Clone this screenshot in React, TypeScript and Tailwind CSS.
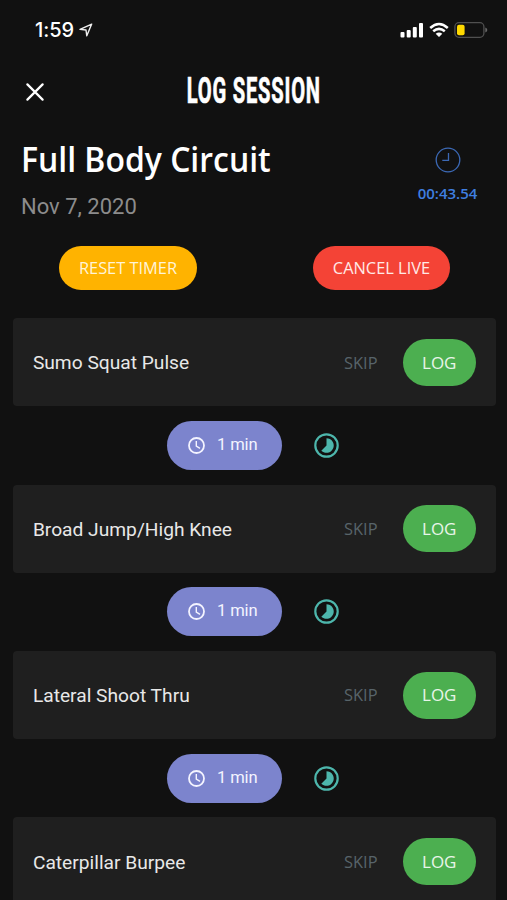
import React from "react";

const exercises = ["Sumo Squat Pulse", "Broad Jump/High Knee", "Lateral Shoot Thru", "Caterpillar Burpee"];

function StatusBar() {
  return (
    <div className="flex h-[60px] shrink-0 items-center justify-between pr-[19px] pl-[35px]">
      <div className="flex items-center gap-[5px]">
        <span className="font-['Inter',sans-serif] text-[20px] leading-6 font-medium tracking-[-0.1px]">1:59</span>
        <svg width="14" height="14" viewBox="0 0 14 14" fill="none" stroke="#eee" strokeWidth="1.4" strokeLinejoin="round">
          <path d="M12.7 1.1 1 6.4 7 7l.8 5.8z" />
        </svg>
      </div>
      <div className="flex items-center">
        <svg width="24" height="16" viewBox="0 0 24 16" fill="#fff">
          <rect x="0.5" y="10" width="4" height="5.5" rx="1" />
          <rect x="6.7" y="8" width="4" height="7.5" rx="1" />
          <rect x="12.8" y="5" width="4" height="10.5" rx="1" />
          <rect x="19" y="1" width="4" height="14.5" rx="1" />
        </svg>
        <svg className="ml-[5px]" width="20" height="16" viewBox="0 0 20 16" fill="none" stroke="#fff" strokeWidth="2.5">
          <path d="M1.2 6Q10-2 18.8 6" />
          <path d="M4.2 9.3q5.8-4.8 11.6 0" />
          <path d="m6.7 11.7 3.3 3.3 3.3-3.3q-3.3-2.6-6.6 0z" fill="#fff" stroke="none" />
        </svg>
        <svg className="ml-[5px]" width="34" height="16" viewBox="0 0 34 16">
          <rect x="0.9" y="0.7" width="29" height="14.6" rx="4" fill="none" stroke="#505050" strokeWidth="1.3" />
          <rect x="3" y="2.7" width="7.6" height="10.6" rx="2" fill="#ffd900" />
          <path d="M31.3 5.4q2 .7 2 2.5t-2 2.5z" fill="#686868" />
        </svg>
      </div>
    </div>
  );
}

function ExerciseCard({ name }: { name: string }) {
  return (
    <div className="flex h-[88px] shrink-0 items-center rounded-[4px] bg-[#1f1f1f] pr-[19.5px] pl-[19.5px]">
      <span className="grow pt-[3px] text-[19.2px] text-[#e8e8e8]">{name}</span>
      <span className="mr-[25px] pt-px font-['Open_Sans',sans-serif] text-[16.4px] text-[#58646a]">SKIP</span>
      <button className="h-[47px] w-[73.5px] rounded-full bg-[#4caf50] font-['Open_Sans',sans-serif] text-[17px] text-[#e8f5e9]">LOG</button>
    </div>
  );
}

function RestRow() {
  return (
    <div className="flex h-[78.35px] shrink-0 items-center pl-[154px]">
      <div className="flex h-[49px] w-[115px] items-center rounded-full bg-[#7c84cd] pl-[19.5px]">
        <svg width="19" height="19" viewBox="0 0 19 19" fill="none" stroke="#f4f4ff" strokeWidth="1.8">
          <circle cx="9.5" cy="9.5" r="7.5" />
          <path d="M9.3 5v5l3.7 2.3" strokeWidth="1.4" />
        </svg>
        <span className="ml-[11px] text-[16.6px] tracking-[-0.1px] text-[#f4f4ff]">1 min</span>
      </div>
      <svg className="ml-[31.5px]" width="25" height="25" viewBox="0 0 25 25">
        <circle cx="12.5" cy="12.5" r="11.2" fill="none" stroke="#4db6ac" strokeWidth="2.2" />
        <path d="M12.5 5.2a7.3 7.3 0 1 1-5.2 12.5l5.2-5.2z" fill="#4db6ac" />
      </svg>
    </div>
  );
}

export default function App() {
  return (
    <main className="flex h-[900px] w-[507px] flex-col overflow-hidden bg-[#111111] font-['Roboto',sans-serif] text-white">
      <StatusBar />
      <header className="grid h-[64px] shrink-0 grid-cols-[1fr_136px_1fr] items-center">
        <svg className="ml-[26px]" width="18" height="18" viewBox="0 0 18 18" stroke="#fff" strokeWidth="2.2" strokeLinecap="round">
          <path d="m1.4 1.4 15.2 15.2m0-15.2L1.4 16.6" />
        </svg>
        <h1 className="flex justify-center pb-[2px]">
          <span className="scale-x-[0.56] text-[36px] leading-10 font-bold tracking-[1.4px] whitespace-nowrap [-webkit-text-stroke:0.7px_white]">LOG SESSION</span>
        </h1>
      </header>
      <section className="flex h-[112px] shrink-0 justify-between pr-[29px] pl-[21px]">
        <div className="pt-[12px]">
          <h2 className="w-[250px] origin-left scale-x-[0.912] font-['Open_Sans',sans-serif] text-[35px] leading-[46px] font-semibold whitespace-nowrap">Full Body Circuit</h2>
          <p className="mt-[11px] text-[22px] leading-7 text-[#8c8c8c]">Nov 7, 2020</p>
        </div>
        <div className="flex w-[61px] flex-col items-center pt-[23px] text-[#3f7fe0]">
          <svg width="26" height="26" viewBox="0 0 26 26" fill="none" stroke="#3c69b5" strokeWidth="1.3">
            <circle cx="13" cy="13" r="11.8" />
            <path d="M13.5 6v7.4H7.3" />
          </svg>
          <span className="mt-[10px] font-['Open_Sans',sans-serif] text-[15px] leading-5 font-semibold">00:43.54</span>
        </div>
      </section>
      <section className="flex h-[82.4px] shrink-0 justify-between pt-[10px] pr-[57px] pl-[59px] font-['Open_Sans',sans-serif]">
        <button className="h-[44px] w-[138px] rounded-full bg-[#ffb300] text-[16.4px] text-[#fff4d8]">RESET TIMER</button>
        <button className="h-[44px] w-[137px] rounded-full bg-[#f44336] text-[16.4px] text-[#ffe9e6]">CANCEL LIVE</button>
      </section>
      <section className="flex flex-col pr-[11.5px] pl-[13.4px]">
        {exercises.map((name, i) => (
          <React.Fragment key={name}>
            <ExerciseCard name={name} />
            {i < exercises.length - 1 && <RestRow />}
          </React.Fragment>
        ))}
      </section>
    </main>
  );
}
